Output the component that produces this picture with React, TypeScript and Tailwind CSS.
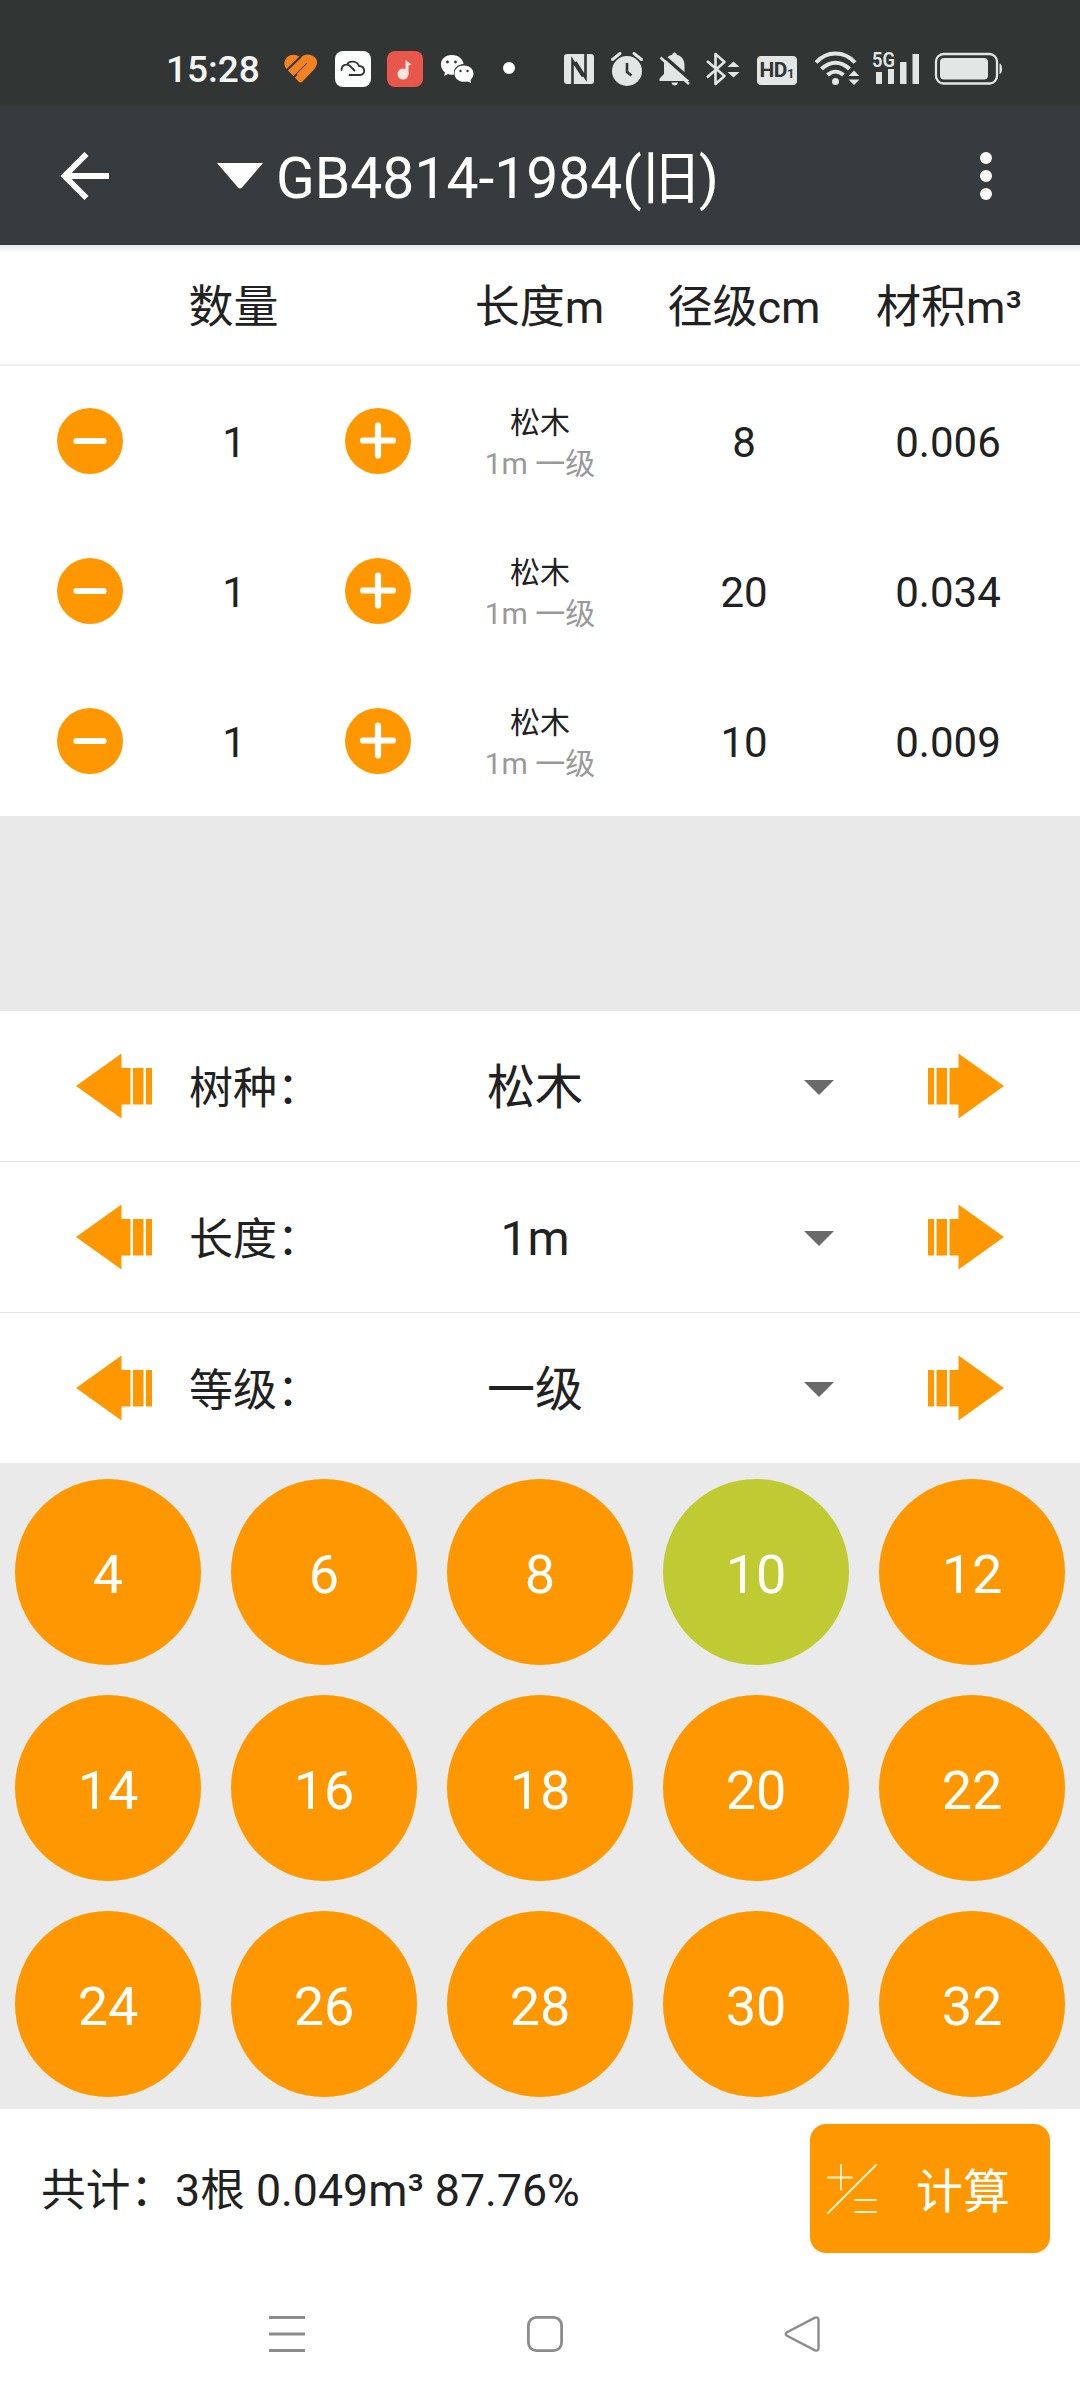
import { useState } from 'react';
import type { ReactNode } from 'react';

type LogRow = {
    id: number;
    count: number;
    species: string;
    spec: string;
    diameter: number;
    volume: string;
};

const initialRows: LogRow[] = [
    { id: 1, count: 1, species: '松木', spec: '1m 一级', diameter: 8, volume: '0.006' },
    { id: 2, count: 1, species: '松木', spec: '1m 一级', diameter: 20, volume: '0.034' },
    { id: 3, count: 1, species: '松木', spec: '1m 一级', diameter: 10, volume: '0.009' },
];

const pickers = [
    { label: '树种：', value: '松木' },
    { label: '长度：', value: '1m' },
    { label: '等级：', value: '一级' },
];

const diameters = [4, 6, 8, 10, 12, 14, 16, 18, 20, 22, 24, 26, 28, 30, 32];

function StatusBar() {
    return (
        <div className="flex h-[106px] items-start bg-[#313534] pt-[48px] text-[#e2e6e5]">
            <div className="ml-[166px] flex h-[42px] w-[98px] items-center text-[37px] leading-none font-medium text-[#f4f6f5]">
                15:28
            </div>
            {/* heart */}
            <svg className="ml-[19px] h-[40px] w-[36px]" viewBox="283 48 36 40">
                <path d="M300.500 57.500C296 53.500 289 54 286 58.500C283 63 284.500 67 287.500 70L298.500 81.500Q300.500 83.500 302.500 81.500L314 69.500C318 65 318 60 314.500 57C310.500 53.500 304.500 53.500 300.500 57.500Z" fill="#f58220" />
                <path d="M286 71L301 56.500M293 78L307.500 63.500" stroke="#313534" strokeWidth="2" fill="none" />
                <path d="M297.500 75L310.500 62" stroke="#f58220" strokeWidth="2.500" fill="none" />
            </svg>
            {/* cloud drive */}
            <svg className="ml-[16px] h-[40px] w-[36px]" viewBox="0 0 36 40">
                <rect y="3" width="36" height="36" rx="8" fill="#fbfdfd" />
                <path d="M6.500 22C6.500 17 11 15.500 14.500 17.500L19.500 22.500M12 16.500C14 12.500 22 12.500 24 18C31 18.500 30.500 27 25 27H14.500" stroke="#2f3433" strokeWidth="1.800" strokeLinecap="round" fill="none" />
            </svg>
            {/* music */}
            <svg className="ml-[16px] h-[40px] w-[36px]" viewBox="0 0 36 40">
                <rect y="3" width="36" height="36" rx="8" fill="#e9564b" />
                <circle cx="16" cy="26" r="5.500" fill="#fde6e0" />
                <path d="M18.500 26V12L24.500 16.500L21.500 17.500V26Z" fill="#fde6e0" />
            </svg>
            {/* wechat */}
            <svg className="ml-[17px] h-[40px] w-[35px]" viewBox="440 48 35 40">
                <path d="M452 55C458.500 55 463 59 463.500 64C457 64.500 453 69 454 74.500C452 75 449.500 74.500 448 74L444 76L445 72.500C438 67 440 55 452 55Z" fill="#fff" />
                <path d="M464 65.500C470 65.500 473.500 69.500 473.500 73.500C473.500 76.500 472 78.500 470.500 80L471 83L467.500 81.500C460 83 454.500 79 454.500 73.500C454.500 69 458.500 65.500 464 65.500Z" fill="#fff" />
                <g fill="#313534">
                    <circle cx="447.500" cy="62" r="1.400" />
                    <circle cx="455.500" cy="62" r="1.400" />
                    <circle cx="460.500" cy="71" r="1.200" />
                    <circle cx="467.500" cy="71" r="1.200" />
                </g>
            </svg>
            <div className="mt-[14px] ml-[28px] h-[12px] w-[12px] rounded-full bg-white" />
            {/* nfc */}
            <svg className="ml-[49px] h-[40px] w-[30px]" viewBox="0 0 30 40">
                <rect y="6" width="30" height="30" rx="3" fill="currentColor" />
                <path d="M8.500 36V12.500L19 28.500M21.500 6V29.500L11.500 14" stroke="#313534" strokeWidth="2.600" fill="none" />
            </svg>
            {/* alarm */}
            <svg className="ml-[17px] h-[40px] w-[32px]" viewBox="0 0 32 40">
                <circle cx="16" cy="23" r="15" fill="currentColor" />
                <path d="M1.500 11.500L9 5.500M30.500 11.500L23 5.500" stroke="currentColor" strokeWidth="3" strokeLinecap="round" />
                <path d="M16 15V24L20.500 27.500" stroke="#313534" strokeWidth="2.600" fill="none" />
            </svg>
            {/* muted bell */}
            <svg className="ml-[15px] h-[40px] w-[34px]" viewBox="0 0 34 40">
                <path d="M16.500 4.500C18 4.500 18.500 5.500 18.700 6.700C24 8 26.500 12 26.500 17V25L32 31.500V33H1.500V30.500L6 26V17C6 12 9 8 14.300 6.700C14.500 5.500 15 4.500 16.500 4.500Z" fill="currentColor" />
                <path d="M13.500 34.500H20C19.500 36.500 18.500 37.500 16.800 37.500C15 37.500 14 36.500 13.500 34.500Z" fill="currentColor" />
                <path d="M4.500 7L34 33" stroke="#313534" strokeWidth="3.500" />
                <path d="M2.500 9.500L31 36" stroke="currentColor" strokeWidth="2.600" />
            </svg>
            {/* bluetooth */}
            <svg className="ml-[14px] h-[40px] w-[34px]" viewBox="0 0 34 40">
                <path d="M1 13L18.500 28L9.500 36V6L18.500 14L1 29.500" stroke="currentColor" strokeWidth="2.600" strokeLinejoin="round" fill="none" />
                <path d="M21.500 19L27.500 13.500L33.500 19ZM21.500 24L27.500 29.500L33.500 24Z" fill="currentColor" />
            </svg>
            <div className="mt-[8px] ml-[17px] flex h-[29px] w-[40px] items-center justify-center rounded-[4px] bg-[#e2e6e5] text-[#313534]">
                <span className="text-[21px] leading-none font-bold tracking-[-0.5px]">HD</span>
                <span className="mt-[5px] text-[13px] leading-none font-bold">1</span>
            </div>
            {/* wifi */}
            <svg className="ml-[17px] h-[40px] w-[46px]" viewBox="0 0 46 40">
                <path d="M2 14.500C13 2.500 30 2.500 41 14.500M7.500 21C16 12.500 27 12.500 35.500 21M13.500 27C18.500 22.500 24.500 22.500 29.500 27" stroke="currentColor" strokeWidth="4" fill="none" />
                <circle cx="21.500" cy="33.500" r="3.500" fill="currentColor" />
                <path d="M34.500 28L40 22.500L45.500 28ZM34.500 31.500L40 37L45.500 31.500Z" fill="currentColor" />
            </svg>
            {/* signal */}
            <svg className="ml-[12px] h-[40px] w-[48px]" viewBox="0 0 48 40">
                <text x="0" y="18.500" fontSize="20" fontWeight="600" textLength="23" lengthAdjust="spacingAndGlyphs" fill="currentColor">5G</text>
                <path d="M4 24H10V36H4ZM16 21H22V36H16ZM28 14H34.500V36H28ZM40.500 6H47V36H40.500Z" fill="currentColor" />
            </svg>
            {/* battery */}
            <svg className="ml-[14px] h-[40px] w-[70px]" viewBox="0 0 70 40">
                <rect x="2" y="6" width="61" height="29.500" rx="7.500" stroke="currentColor" strokeWidth="2.300" fill="none" />
                <rect x="6" y="10" width="48" height="21.500" rx="4" fill="currentColor" />
                <path d="M65.500 15.500Q68 16 68 21Q68 25.500 65.500 26Z" fill="currentColor" />
            </svg>
        </div>
    );
}

function AppBar() {
    return (
        <div className="flex h-[139px] items-center bg-[#373b3e] text-white">
            <button className="ml-[56px] flex h-[56px] w-[56px] items-center justify-center">
                <svg className="h-[56px] w-[56px]" viewBox="56 148 56 56" fill="none" stroke="currentColor" strokeWidth="5.800">
                    <path d="M86.500 154L64.500 176L86.500 198M64 176H109" />
                </svg>
            </button>
            <svg className="ml-[105px] h-[26px] w-[46px]" viewBox="0 0 46 26">
                <path d="M0 0H46L25 24.500Q23 26.500 21 24.500Z" fill="currentColor" />
            </svg>
            <h1 className="ml-[13px] pt-[6px] text-[57px] leading-none whitespace-nowrap">GB4814-1984(旧)</h1>
            <div className="mr-[88px] ml-auto flex flex-col gap-[6px]">
                <span className="h-[12px] w-[12px] rounded-full bg-white" />
                <span className="h-[12px] w-[12px] rounded-full bg-white" />
                <span className="h-[12px] w-[12px] rounded-full bg-white" />
            </div>
        </div>
    );
}

function RoundButton({ children, onClick }: { children: ReactNode; onClick: () => void }) {
    return (
        <button onClick={onClick} className="h-[66px] w-[66px] rounded-full bg-[#ff9800]">
            <svg className="h-[66px] w-[66px]" viewBox="0 0 66 66" stroke="white" strokeWidth="6.200" strokeLinecap="round">
                {children}
            </svg>
        </button>
    );
}

function StripedArrow({ flip }: { flip?: boolean }) {
    return (
        <svg className={flip ? 'h-[66px] w-[76px] -scale-x-100' : 'h-[66px] w-[76px]'} viewBox="0 0 76 66" fill="#ff9800">
            <path d="M0 33L45.500 0.500V15H54.500V51.500H45.500V65.500Z" />
            <path d="M57 15H67.500V51.500H57ZM70 15H76V51.500H70Z" />
        </svg>
    );
}

function PickerRow({ label, value, last }: { label: string; value: string; last: boolean }) {
    return (
        <div className={last ? 'flex h-[150px] items-center' : 'flex h-[151px] items-center border-b border-[#e4e4e4]'}>
            <button className="ml-[76px]">
                <StripedArrow />
            </button>
            <span className="ml-[37px] w-[135px] pt-[5px] text-[44px] leading-none whitespace-nowrap">{label}</span>
            <span className="ml-[60px] w-[382px] pt-[4px] pr-[80px] text-center text-[48px] leading-none">{value}</span>
            <svg className="mt-[2px] ml-[38px] h-[15px] w-[30px]" viewBox="0 0 30 15">
                <path d="M0 0H30L15 15Z" fill="#6a6a6a" />
            </svg>
            <button className="ml-[94px]">
                <StripedArrow flip />
            </button>
        </div>
    );
}

export default function App() {
    const [rows, setRows] = useState(initialRows);
    const [selected, setSelected] = useState(10);

    const changeCount = (id: number, delta: number) => {
        setRows(rows.map((r) => (r.id === id ? { ...r, count: Math.max(0, r.count + delta) } : r)));
    };

    return (
        <div className="flex h-[2400px] w-[1080px] flex-col overflow-hidden bg-white font-[Roboto,'Noto_Sans_CJK_SC',sans-serif] text-[#212121]" lang="zh-CN">
            <StatusBar />
            <AppBar />

            <div className="grid h-[121px] grid-cols-[467px_145px_264px_144px] items-center border-b-2 border-[#f0f0f0] bg-linear-to-b from-[#e6e8eb] to-white to-[8px] pt-[6px] text-center text-[45px] leading-none whitespace-nowrap">
                <span>数量</span>
                <span>长度m</span>
                <span>径级cm</span>
                <span>材积m³</span>
            </div>

            <div className="flex flex-col">
                {rows.map((row) => (
                    <div key={row.id} className="grid h-[150px] grid-cols-[180px_108px_180px_144px_264px_144px] items-center text-center text-[42px] leading-none">
                        <div className="flex justify-center">
                            <RoundButton onClick={() => changeCount(row.id, -1)}>
                                <path d="M19.500 33H46.500" />
                            </RoundButton>
                        </div>
                        <span className="pt-[4px]">{row.count}</span>
                        <div className="flex justify-center">
                            <RoundButton onClick={() => changeCount(row.id, 1)}>
                                <path d="M18 32.500H48M33 17.500V47.500" />
                            </RoundButton>
                        </div>
                        <div className="flex flex-col pt-[3px] text-[30px] leading-[41px] whitespace-nowrap">
                            <span>{row.species}</span>
                            <span className="text-[#999999]">{row.spec}</span>
                        </div>
                        <span className="pt-[4px]">{row.diameter}</span>
                        <span className="pt-[4px]">{row.volume}</span>
                    </div>
                ))}
            </div>

            <div className="h-[195px] bg-[#e9e9e9]" />

            <div className="flex flex-col">
                {pickers.map((p, i) => (
                    <PickerRow key={p.label} label={p.label} value={p.value} last={i === pickers.length - 1} />
                ))}
            </div>

            <div className="h-[646px] overflow-hidden bg-[#eaeaea] pt-px">
                <div className="grid grid-cols-5">
                    {diameters.map((d) => (
                        <div key={d} className="flex h-[216px] items-center justify-center">
                            <button
                                onClick={() => setSelected(d)}
                                className={
                                    d === selected
                                        ? 'h-[186px] w-[186px] rounded-full bg-[#c0ca33] pt-[5px] text-[54px] leading-none text-white'
                                        : 'h-[186px] w-[186px] rounded-full bg-[#ff9800] pt-[5px] text-[54px] leading-none text-white'
                                }
                            >
                                {d}
                            </button>
                        </div>
                    ))}
                </div>
            </div>

            <div className="flex h-[159px] items-center justify-between pr-[30px] pl-[41px]">
                <p className="pt-[5px] text-[44.7px] leading-none whitespace-nowrap">共计：3根 0.049m³ 87.76%</p>
                <button className="flex h-[129px] w-[240px] items-center rounded-[16px] bg-[#ff9800] text-white">
                    <svg className="ml-[17px] h-[50px] w-[50px]" viewBox="0 0 50 50" stroke="#fff6d8" strokeWidth="1.800" strokeLinecap="round">
                        <path d="M1 13.500H25M14 1V25.500M1 49L49 1M28 36H49M28 48H49" />
                    </svg>
                    <span className="ml-[39px] pt-[5px] text-[47px] leading-none">计算</span>
                </button>
            </div>

            <div className="flex flex-1 items-start pt-[47px] text-[#8c8c8c]">
                <svg className="ml-[268px] h-[38px] w-[38px]" viewBox="0 0 38 38" stroke="currentColor" strokeWidth="3">
                    <path d="M1 2.500H37M1 19H37M1 35.500H37" />
                </svg>
                <svg className="ml-[220px] h-[38px] w-[38px]" viewBox="0 0 38 38" stroke="currentColor" strokeWidth="2.800" fill="none">
                    <rect x="2.400" y="2.400" width="33.200" height="33.200" rx="8" />
                </svg>
                <svg className="ml-[220px] h-[38px] w-[38px]" viewBox="0 0 38 38" stroke="currentColor" strokeWidth="2.400" fill="none">
                    <path d="M3 17.200L31 2.700Q34.500 1.500 34.500 5V33Q34.500 36.500 31 35.300L3 20.800Q0.500 19 3 17.200Z" />
                </svg>
            </div>
        </div>
    );
}
